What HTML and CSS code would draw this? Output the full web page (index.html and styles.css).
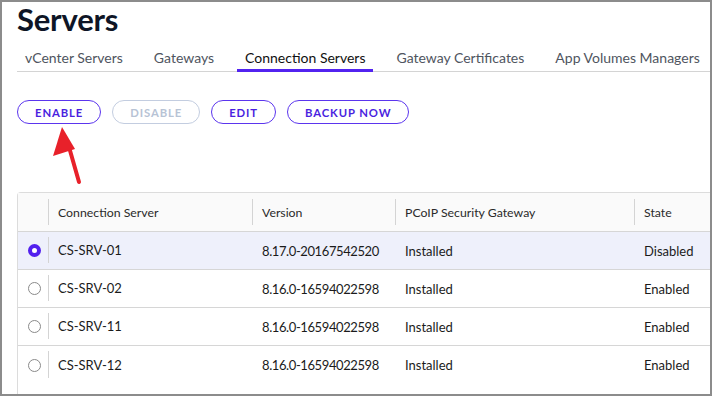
FILE: index.html
```html
<!DOCTYPE html>
<html>
<head>
<meta charset="utf-8">
<link rel="stylesheet" href="styles.css">
</head>
<body>
<div class="frame">
  <h1 class="title">Servers</h1>
  <nav class="tabs">
    <a class="tab">vCenter Servers</a>
    <a class="tab">Gateways</a>
    <a class="tab active">Connection Servers</a>
    <a class="tab">Gateway Certificates</a>
    <a class="tab">App Volumes Managers</a>
  </nav>
  <div class="actions">
    <button class="btn">ENABLE</button>
    <button class="btn disabled">DISABLE</button>
    <button class="btn">EDIT</button>
    <button class="btn">BACKUP NOW</button>
  </div>
  <svg class="arrow" width="40" height="70" viewBox="0 0 40 70">
    <line x1="37" y1="63" x2="27" y2="28" stroke="#e8212a" stroke-width="4" stroke-linecap="round"/>
    <polygon points="20,8 11,37 33,30" fill="#e8212a"/>
  </svg>
  <div class="grid">
    <div class="row head">
      <div class="c sel"></div>
      <div class="c th">Connection Server</div>
      <div class="c th">Version</div>
      <div class="c th">PCoIP Security Gateway</div>
      <div class="c th">State</div>
    </div>
    <div class="row selected">
      <div class="c sel"><span class="radio on"></span></div>
      <div class="c name">CS-SRV-01</div>
      <div class="c ver">8.17.0-20167542520</div>
      <div class="c">Installed</div>
      <div class="c">Disabled</div>
    </div>
    <div class="row">
      <div class="c sel"><span class="radio"></span></div>
      <div class="c name">CS-SRV-02</div>
      <div class="c ver">8.16.0-16594022598</div>
      <div class="c">Installed</div>
      <div class="c">Enabled</div>
    </div>
    <div class="row">
      <div class="c sel"><span class="radio"></span></div>
      <div class="c name">CS-SRV-11</div>
      <div class="c ver">8.16.0-16594022598</div>
      <div class="c">Installed</div>
      <div class="c">Enabled</div>
    </div>
    <div class="row last">
      <div class="c sel"><span class="radio"></span></div>
      <div class="c name">CS-SRV-12</div>
      <div class="c ver">8.16.0-16594022598</div>
      <div class="c">Installed</div>
      <div class="c">Enabled</div>
    </div>
  </div>
</div>
</body>
</html>
```
FILE: styles.css
```css
* { box-sizing: border-box; }
html, body { margin: 0; padding: 0; background: #fff; }
body { font-family: Lato, "Open Sans", sans-serif; color: #1b1b1b; }
.frame {
  position: relative;
  width: 712px;
  height: 396px;
  border: 2px solid #8c8c8c;
  overflow: hidden;
  padding: 0 0 0 15px;
}
.title {
  margin: 0;
  font-size: 31px;
  line-height: 34px;
  font-weight: 700;
  color: #0e1526;
  letter-spacing: -0.2px;
}
.tabs {
  display: flex;
  gap: 15px;
  margin-top: 4px;
  border-bottom: 1px solid #d4d4d4;
  height: 32px;
  align-items: stretch;
}
.tab {
  display: flex;
  align-items: center;
  padding: 5px 8px 0;
  font-size: 14px;
  color: #4f5560;
  white-space: nowrap;
  border-bottom: 3px solid transparent;
  margin-bottom: -1px;
}
.tab.active { color: #101010; border-bottom-color: #5223f0; }
.actions {
  display: flex;
  gap: 11px;
  margin-top: 28px;
}
.btn {
  height: 24px;
  border: 1px solid #5b35ee;
  border-radius: 12px;
  background: #fff;
  color: #4a1fe0;
  font-family: Lato, sans-serif;
  font-weight: 700;
  font-size: 11.3px;
  letter-spacing: 0.9px;
  padding: 0 17px;
}
.btn.disabled { border-color: #c3cde0; color: #b7c3d5; }
.arrow { position: absolute; left: 40px; top: 117px; }
.grid {
  margin-top: 68px;
  border: 1px solid #dcdcdc;
  border-right: none;
  border-radius: 4px 0 0 0;
  width: 760px;
  height: 260px;
}
.row {
  display: grid;
  grid-template-columns: 30px 204px 143px 239px 140px;
  height: 38px;
  border-bottom: 1px solid #d6d6d6;
  font-size: 13px;
}
.row.last { border-bottom: none; }
.row.head { height: 39px; background: #fafafa; color: #2a2a2a; font-size: 12.3px; }
.row.selected { background: #eef0fb; }
.c { display: flex; align-items: center; padding-left: 10px; white-space: nowrap; }
.c.sel { padding-left: 0; justify-content: center; }
.ver { letter-spacing: -0.4px; }
.th { border-left: 1px solid #d4d4d4; margin: 6px 0; padding-left: 9px; }
.name { border-left: 1px solid #d4d4d4; margin: 5px 0 6px; padding-left: 9px; }
.radio {
  width: 13px; height: 13px;
  border: 1px solid #8a8a8a;
  border-radius: 50%;
  background: #fff;
  margin-left: 2px;
}
.radio.on { border: 4px solid #5220ee; }
```
